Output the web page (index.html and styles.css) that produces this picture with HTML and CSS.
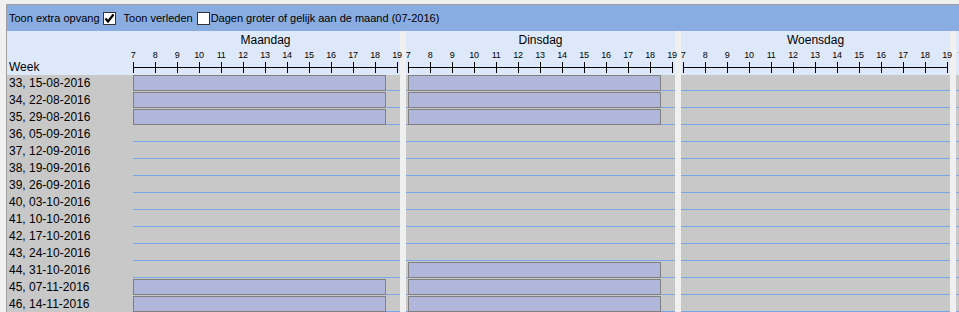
FILE: index.html
```html
<!DOCTYPE html>
<html>
	<head>
		<meta charset="utf-8">
		<title>Opvang rooster</title>
		<link rel="stylesheet" href="styles.css">
	</head>
	<body>
		<div class="panel">
			<div class="toolbar">
				<span class="opt">Toon extra opvang</span>
				<span class="check on">
					<svg width="11" height="11" viewBox="0 0 11 11"><polyline points="1.5,5.5 4,8.5 9.5,1.5" fill="none" stroke="#000" stroke-width="2.2"/></svg>
				</span>
				<span class="opt gap">Toon verleden</span>
				<span class="check"></span>
				<span class="opt tight">Dagen groter of gelijk aan de maand (07-2016)</span>
			</div>

			<div class="sheet">
				<div class="row head">
					<div class="label">Week</div>
					<div class="lane">
						<div class="day-name">Maandag</div>
						<div class="hours"><span>7</span><span>8</span><span>9</span><span>10</span><span>11</span><span>12</span><span>13</span><span>14</span><span>15</span><span>16</span><span>17</span><span>18</span><span>19</span></div>
						<div class="axis"></div>
					</div>
					<div class="sep"></div>
					<div class="lane">
						<div class="day-name">Dinsdag</div>
						<div class="hours"><span>7</span><span>8</span><span>9</span><span>10</span><span>11</span><span>12</span><span>13</span><span>14</span><span>15</span><span>16</span><span>17</span><span>18</span><span>19</span></div>
						<div class="axis"></div>
					</div>
					<div class="sep"></div>
					<div class="lane">
						<div class="day-name">Woensdag</div>
						<div class="hours"><span>7</span><span>8</span><span>9</span><span>10</span><span>11</span><span>12</span><span>13</span><span>14</span><span>15</span><span>16</span><span>17</span><span>18</span><span>19</span></div>
						<div class="axis"></div>
					</div>
					<div class="sep"></div>
					<div class="lane last">
						<div class="day-name"></div>
						<div class="hours"><span>7</span></div>
					</div>
				</div>

				<div class="row">
					<div class="label">33, 15-08-2016</div>
					<div class="lane"><div class="bar" style="width:253px"></div></div>
					<div class="sep"></div>
					<div class="lane"><div class="bar" style="width:253px"></div></div>
					<div class="sep"></div>
					<div class="lane"></div>
					<div class="sep"></div>
					<div class="lane last"></div>
				</div>
				<div class="row">
					<div class="label">34, 22-08-2016</div>
					<div class="lane"><div class="bar" style="width:253px"></div></div>
					<div class="sep"></div>
					<div class="lane"><div class="bar" style="width:253px"></div></div>
					<div class="sep"></div>
					<div class="lane"></div>
					<div class="sep"></div>
					<div class="lane last"></div>
				</div>
				<div class="row">
					<div class="label">35, 29-08-2016</div>
					<div class="lane"><div class="bar" style="width:253px"></div></div>
					<div class="sep"></div>
					<div class="lane"><div class="bar" style="width:253px"></div></div>
					<div class="sep"></div>
					<div class="lane"></div>
					<div class="sep"></div>
					<div class="lane last"></div>
				</div>
				<div class="row">
					<div class="label">36, 05-09-2016</div>
					<div class="lane"></div><div class="sep"></div><div class="lane"></div><div class="sep"></div><div class="lane"></div><div class="sep"></div><div class="lane last"></div>
				</div>
				<div class="row">
					<div class="label">37, 12-09-2016</div>
					<div class="lane"></div><div class="sep"></div><div class="lane"></div><div class="sep"></div><div class="lane"></div><div class="sep"></div><div class="lane last"></div>
				</div>
				<div class="row">
					<div class="label">38, 19-09-2016</div>
					<div class="lane"></div><div class="sep"></div><div class="lane"></div><div class="sep"></div><div class="lane"></div><div class="sep"></div><div class="lane last"></div>
				</div>
				<div class="row">
					<div class="label">39, 26-09-2016</div>
					<div class="lane"></div><div class="sep"></div><div class="lane"></div><div class="sep"></div><div class="lane"></div><div class="sep"></div><div class="lane last"></div>
				</div>
				<div class="row">
					<div class="label">40, 03-10-2016</div>
					<div class="lane"></div><div class="sep"></div><div class="lane"></div><div class="sep"></div><div class="lane"></div><div class="sep"></div><div class="lane last"></div>
				</div>
				<div class="row">
					<div class="label">41, 10-10-2016</div>
					<div class="lane"></div><div class="sep"></div><div class="lane"></div><div class="sep"></div><div class="lane"></div><div class="sep"></div><div class="lane last"></div>
				</div>
				<div class="row">
					<div class="label">42, 17-10-2016</div>
					<div class="lane"></div><div class="sep"></div><div class="lane"></div><div class="sep"></div><div class="lane"></div><div class="sep"></div><div class="lane last"></div>
				</div>
				<div class="row">
					<div class="label">43, 24-10-2016</div>
					<div class="lane"></div><div class="sep"></div><div class="lane"></div><div class="sep"></div><div class="lane"></div><div class="sep"></div><div class="lane last"></div>
				</div>
				<div class="row">
					<div class="label">44, 31-10-2016</div>
					<div class="lane"></div>
					<div class="sep"></div>
					<div class="lane"><div class="bar" style="width:253px"></div></div>
					<div class="sep"></div>
					<div class="lane"></div>
					<div class="sep"></div>
					<div class="lane last"></div>
				</div>
				<div class="row">
					<div class="label">45, 07-11-2016</div>
					<div class="lane"><div class="bar" style="width:253px"></div></div>
					<div class="sep"></div>
					<div class="lane"><div class="bar" style="width:253px"></div></div>
					<div class="sep"></div>
					<div class="lane"></div>
					<div class="sep"></div>
					<div class="lane last"></div>
				</div>
				<div class="row">
					<div class="label">46, 14-11-2016</div>
					<div class="lane"><div class="bar" style="width:253px"></div></div>
					<div class="sep"></div>
					<div class="lane"><div class="bar" style="width:253px"></div></div>
					<div class="sep"></div>
					<div class="lane"></div>
					<div class="sep"></div>
					<div class="lane last"></div>
				</div>
			</div>
		</div>
	</body>
</html>
```

FILE: styles.css
```css
*{
	margin: 0;
	padding: 0;
	box-sizing: border-box;
}
html,body{
	overflow: hidden;
}
body{
	background: #f0f0f0;
	font-family: "Liberation Sans", Arial, sans-serif;
	font-size: 11px;
	color: #000;
}
.panel{
	margin: 4px 0 0 6px;
	border-top: 1px solid #a0a0a0;
	border-left: 1px solid #a0a0a0;
	overflow: hidden;
}

/* bovenbalk met opties */
.toolbar{
	height: 26px;
	background: #8aade1;
	display: flex;
	align-items: center;
	padding-left: 2px;
	white-space: nowrap;
}
.opt{
	margin-right: 3px;
	line-height: 13px;
}
.opt.gap{
	margin-left: 8px;
	margin-right: 4px;
}
.opt.tight{
	margin-left: 1px;
}
.check{
	width: 13px;
	height: 13px;
	border: 1px solid #333;
	background: #fff;
	display: flex;
	align-items: center;
	justify-content: center;
}

/* rooster */
.sheet{
	width: max-content;
}
.row{
	display: flex;
	height: 17px;
}
.label{
	width: 126px;
	flex: none;
	background: #c8c8c8;
	padding-left: 2px;
	font-size: 12px;
	line-height: 17px;
	white-space: nowrap;
}
.lane{
	width: 269px;
	flex: none;
	padding: 0 2px;
	background: #c8c8c8 linear-gradient(to bottom, transparent 15px, #7aa6e8 15px, #7aa6e8 16px, transparent 16px);
}
.label + .lane{
	width: 267px;
	padding-left: 0;
}
.lane.last{
	width: 10px;
}
.sep{
	width: 6px;
	flex: none;
	background: #f0f0f0;
}
.bar{
	height: 16px;
	background: #b1b7db;
	border: 1px solid #808080;
}

/* kop met dagen en uren */
.row.head{
	height: 44px;
}
.head .label,
.head .lane{
	background: #dde9fb;
}
.head .label{
	display: flex;
	align-items: flex-end;
	line-height: 14px;
	padding-bottom: 1px;
}
.day-name{
	height: 18px;
	line-height: 18px;
	text-align: center;
	font-size: 12px;
	width: 265px;
}
.last .day-name{
	width: auto;
}
.hours{
	display: flex;
	height: 12px;
	margin-left: -11px;
	font-size: 9px;
	line-height: 12px;
	letter-spacing: -0.3px;
	position: relative;
	z-index: 1;
}
.hours span{
	width: 22px;
	flex: none;
	text-align: center;
}
.last .hours span{
	width: 16px;
	text-align: right;
}
.axis{
	width: 265px;
	height: 11px;
	margin-top: 1px;
	background:
		linear-gradient(to bottom, transparent 5px, #000 5px, #000 6px, transparent 6px),
		repeating-linear-gradient(to right, #000 0, #000 1px, transparent 1px, transparent 22px);
}
```
